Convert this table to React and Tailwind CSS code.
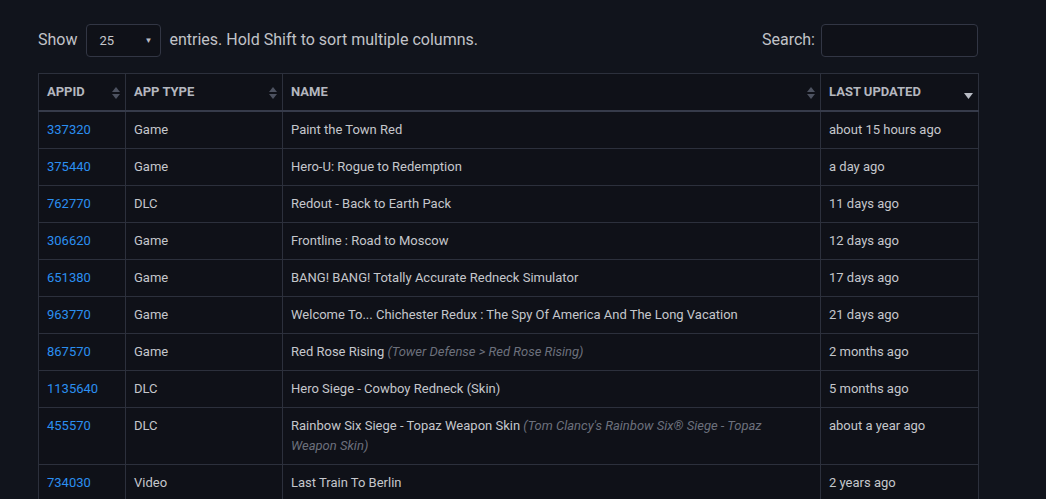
import { Fragment } from "react";

const rows = [
  { id: "337320", type: "Game", name: "Paint the Town Red", updated: "about 15 hours ago" },
  { id: "375440", type: "Game", name: "Hero-U: Rogue to Redemption", updated: "a day ago" },
  { id: "762770", type: "DLC", name: "Redout - Back to Earth Pack", updated: "11 days ago" },
  { id: "306620", type: "Game", name: "Frontline : Road to Moscow", updated: "12 days ago" },
  { id: "651380", type: "Game", name: "BANG! BANG! Totally Accurate Redneck Simulator", updated: "17 days ago" },
  { id: "963770", type: "Game", name: "Welcome To... Chichester Redux : The Spy Of America And The Long Vacation", updated: "21 days ago" },
  { id: "867570", type: "Game", name: "Red Rose Rising", sub: "(Tower Defense > Red Rose Rising)", updated: "2 months ago" },
  { id: "1135640", type: "DLC", name: "Hero Siege - Cowboy Redneck (Skin)", updated: "5 months ago" },
  { id: "455570", type: "DLC", name: "Rainbow Six Siege - Topaz Weapon Skin", sub: "(Tom Clancy's Rainbow Six® Siege - Topaz Weapon Skin)", updated: "about a year ago" },
  { id: "734030", type: "Video", name: "Last Train To Berlin", updated: "2 years ago" },
];

function SortBoth() {
  return (
    <svg width="8" height="12" viewBox="0 0 8 12" className="absolute right-[5px] top-[13px]">
      <path d="M4 0 L8 5 L0 5 Z" fill="#4d5260" />
      <path d="M4 12 L8 7 L0 7 Z" fill="#4d5260" />
    </svg>
  );
}

function SortDesc() {
  return (
    <svg width="9" height="6" viewBox="0 0 9 6" className="absolute right-[5px] top-[19px]">
      <path d="M0 0 L9 0 L4.5 6 Z" fill="#b9bcc4" />
    </svg>
  );
}

export default function App() {
  return (
    <div className="min-h-[499px] bg-[#11141c] px-[38px] pt-[24px] text-[#c5c7cc] font-['Roboto',sans-serif]">
      <div className="flex items-center justify-between w-[940px] h-[33px]">
        <div className="flex items-center text-[16px] text-[#c1c3c8] -mt-[2px]">
          <span>Show</span>
          <div className="ml-[9px] mr-[8px] w-[75px] h-[33px] mt-[2px] rounded border border-[#323644] bg-[#0f1118] flex items-center justify-between pl-[12px] pr-[8px] text-[13px] text-[#c5c7cc]">
            <span>25</span>
            <span className="text-[8px] text-[#b9bcc4]">▼</span>
          </div>
          <span>entries. Hold Shift to sort multiple columns.</span>
        </div>
        <div className="flex items-center text-[16px] text-[#c1c3c8]">
          <span className="mr-[6px] -mt-[2px]">Search:</span>
          <div className="w-[157px] h-[33px] rounded border border-[#323644] bg-[#0f1118]" />
        </div>
      </div>

      <table className="mt-[16px] w-[940px] table-fixed border-collapse text-[13px] leading-[20px] bg-[#0f1118]">
        <colgroup>
          <col className="w-[87px]" />
          <col className="w-[157px]" />
          <col className="w-[538px]" />
          <col className="w-[158px]" />
        </colgroup>
        <thead>
          <tr className="text-left text-[13px] font-bold uppercase text-[#b4b7bf]">
            {["AppID", "App Type", "Name"].map((h) => (
              <th key={h} className="relative h-[37px] px-[8px] pt-[1px] border border-[#2c303c] border-b-2 border-b-[#363b4a] font-bold">
                {h}
                <SortBoth />
              </th>
            ))}
            <th className="relative h-[37px] px-[8px] pt-[1px] border border-[#2c303c] border-b-2 border-b-[#363b4a] font-bold">
              Last Updated
              <SortDesc />
            </th>
          </tr>
        </thead>
        <tbody>
          {rows.map((r) => (
            <tr key={r.id}>
              <td className="px-[8px] py-[8px] align-top border border-[#2c303c] text-[#2b8ff0]">{r.id}</td>
              <td className="px-[8px] py-[8px] align-top border border-[#2c303c]">{r.type}</td>
              <td className="pl-[8px] pr-[16px] py-[8px] align-top border border-[#2c303c]">
                {r.name}
                {r.sub && (
                  <Fragment>
                    {" "}
                    <i className="text-[#6c707c]">{r.sub}</i>
                  </Fragment>
                )}
              </td>
              <td className="px-[8px] py-[8px] align-top border border-[#2c303c]">{r.updated}</td>
            </tr>
          ))}
        </tbody>
      </table>
    </div>
  );
}
